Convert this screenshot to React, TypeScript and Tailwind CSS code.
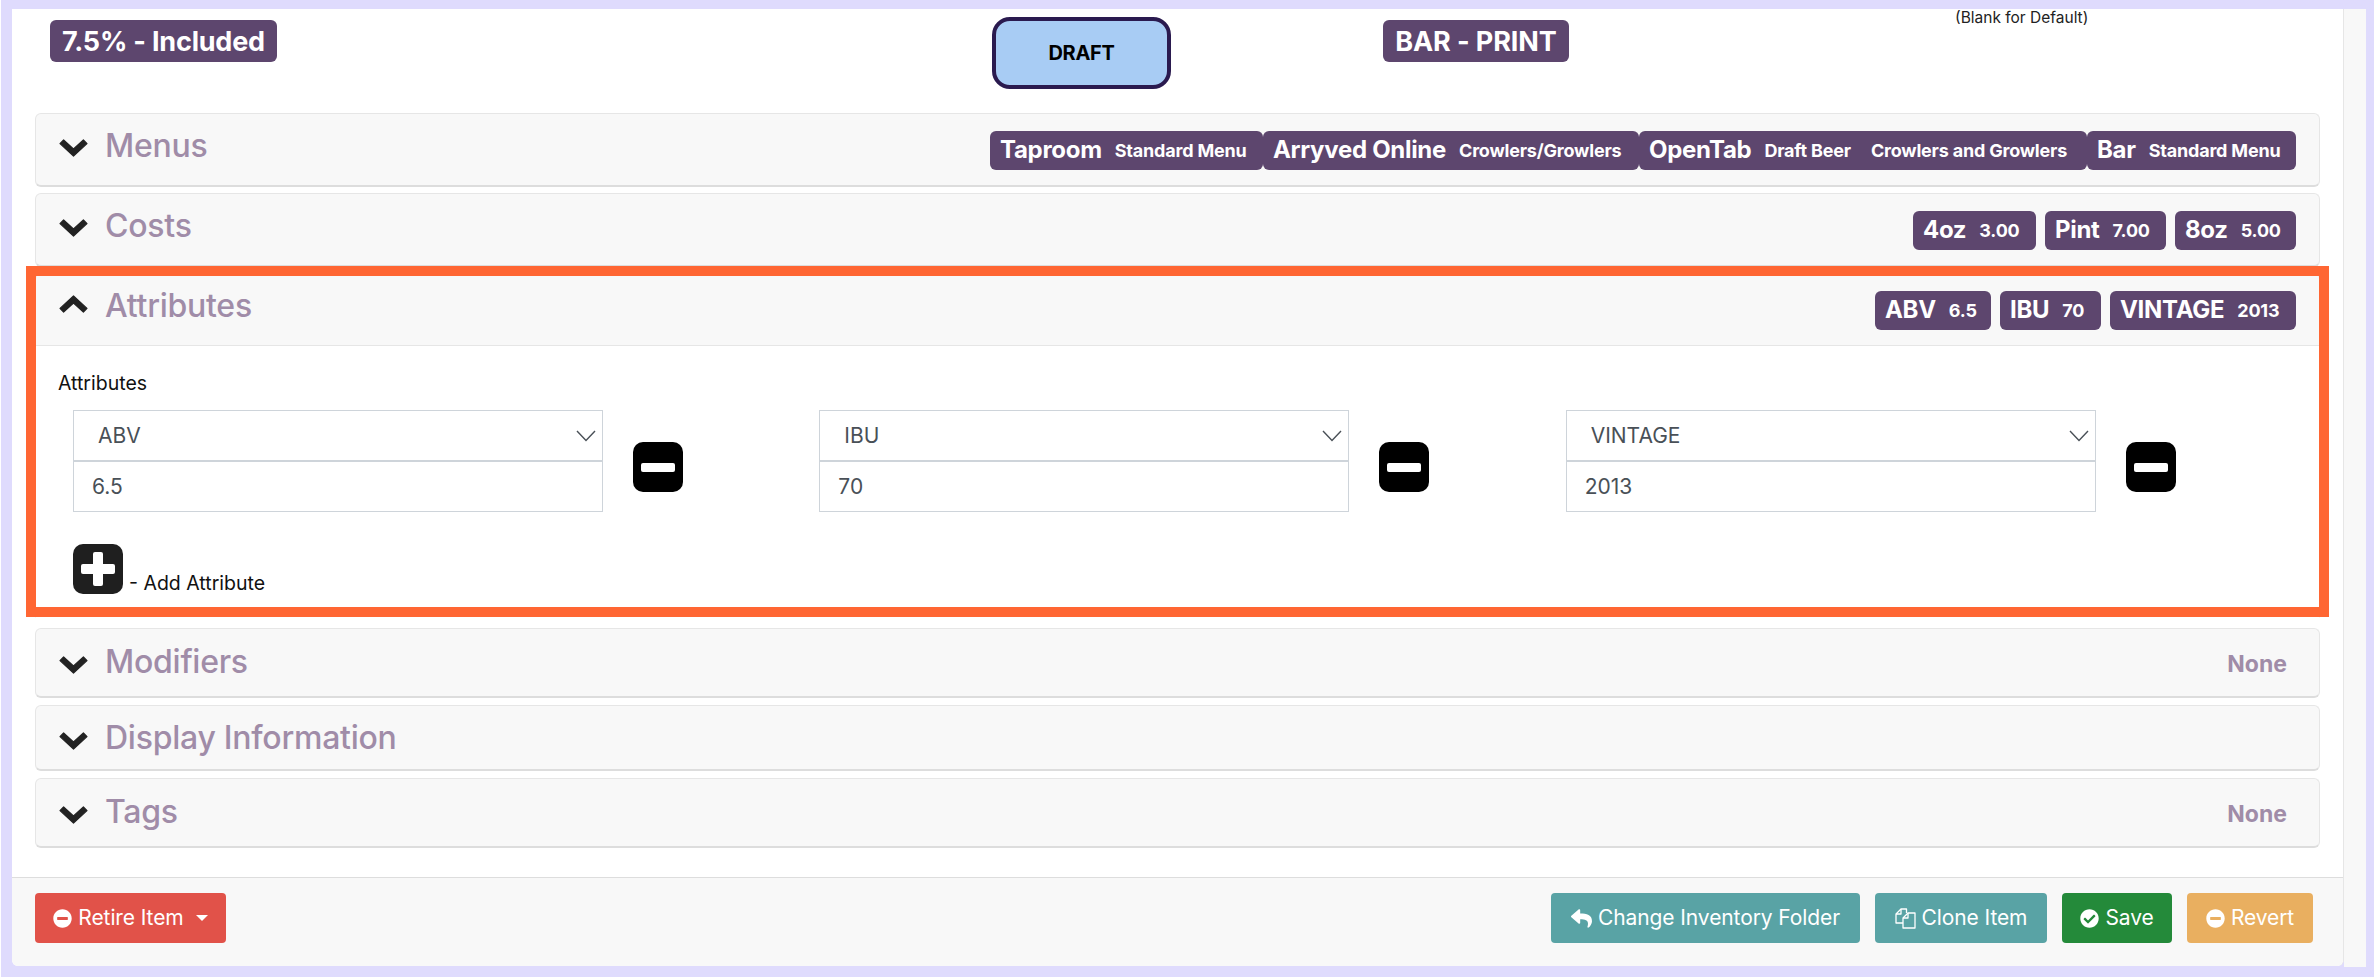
import React from "react";
import { FaMinusCircle, FaCheckCircle, FaReply } from "react-icons/fa";

function Tag({ main, subs, cls }: { main: string; subs: string[]; cls: string }) {
  return (
    <div className={`flex h-[39px] items-center rounded-[6px] bg-[#5d466e] pl-[10px] text-white ${cls}`}>
      <span className="-mt-[2px] text-[24px] leading-none font-bold tracking-[-0.3px]">{main}</span>
      {subs.map((s, i) => (
        <span key={s} className={`mt-[1px] text-[18px] leading-none font-bold tracking-[-0.2px] ${i === 0 ? "ml-[13px]" : "ml-[20px]"}`}>{s}</span>
      ))}
    </div>
  );
}

function Chevron({ up }: { up?: boolean }) {
  return (
    <svg width="29" height="18" viewBox="0 0 29 18" className={`mt-[5px] shrink-0 text-[#222222] ${up ? "-translate-y-[4px] rotate-180" : ""}`} fill="currentColor" stroke="currentColor" strokeWidth="1.2" strokeLinejoin="round">
      <path d="M1 4.6 L4.6 1 L14.5 10 L24.4 1 L28 4.6 L14.5 17 Z" />
    </svg>
  );
}

function Header({ title, open, right, h }: { title: string; open?: boolean; right?: React.ReactNode; h: string }) {
  return (
    <div className={`flex items-center pl-[23px] pr-[24px] ${h}`}>
      <Chevron up={open} />
      <span className="ml-[17px] text-[32px] leading-none font-medium tracking-[-0.25px] text-[#a08ca8]">{title}</span>
      <div className="ml-auto flex items-center">{right}</div>
    </div>
  );
}

const cardCls = "rounded-[6px] border border-b-2 border-[#e6e6e6] border-b-[#dddddd] bg-[#f8f8f8]";

function None() {
  return <span className="mr-[8px] mt-[4px] text-[23px] leading-none font-bold text-[#a08ca8]">None</span>;
}

function MinusBox() {
  return (
    <svg width="50" height="50" viewBox="0 0 50 50" className="ml-[30px] mt-[12px] shrink-0">
      <rect width="50" height="50" rx="10" fill="#000000" />
      <rect x="8" y="21" width="34" height="9" rx="2" fill="#ffffff" />
    </svg>
  );
}

function PlusBox() {
  return (
    <svg width="50" height="50" viewBox="0 0 50 50" className="shrink-0">
      <rect width="50" height="50" rx="10" fill="#1f1f1f" />
      <rect x="8" y="20" width="34" height="10" rx="2" fill="#ffffff" />
      <rect x="20" y="8" width="10" height="34" rx="2" fill="#ffffff" />
    </svg>
  );
}

function FilesIcon() {
  return (
    <svg width="21" height="21" viewBox="0 0 21 21" fill="none" stroke="#ffffff" strokeWidth="1.3" strokeLinejoin="round" className="shrink-0">
      <path d="M11.5 5V1H6L1 6v9h7" />
      <path d="M6 1v5H1" />
      <path d="M8 20V10l5-5h7v15z" />
      <path d="M13 5v5H8" />
    </svg>
  );
}

function Attr({ name, value }: { name: string; value: string }) {
  return (
    <div className="flex items-center pl-[14px]">
      <div className="w-[530px]">
        <div className="flex h-[51px] items-center justify-between border border-[#ced4da] pl-[24px] pr-[6px] text-[21px] text-[#495057]">
          <span>{name}</span>
          <svg width="20" height="12" viewBox="0 0 20 12" fill="none" stroke="#495057" strokeWidth="1.4"><path d="M1 1l9 9.5L19 1" /></svg>
        </div>
        <div className="flex h-[51px] items-center border border-[#ced4da] pl-[18px] pt-[1px] text-[21px] text-[#495057]">{value}</div>
      </div>
      <MinusBox />
    </div>
  );
}

function Btn({ icon, label, cls, caret }: { icon: React.ReactNode; label: string; cls: string; caret?: boolean }) {
  return (
    <div className={`flex h-[50px] items-center justify-center gap-[6px] rounded-[4px] text-[21px] text-white ${cls}`}>
      {icon}
      <span className="tracking-[-0.1px]">{label}</span>
      {caret && <span className="ml-[6px] h-0 w-0 border-x-[6px] border-t-[6px] border-x-transparent border-t-white" />}
    </div>
  );
}

export default function App() {
  return (
    <div className="flex h-[978px] w-[2374px] overflow-hidden border-b border-l border-white bg-[#dfdbfd] pl-[11px] pt-[9px]" style={{ fontFamily: "Inter, sans-serif" }}>
      <div className="flex h-[957px] w-[2332px] flex-col rounded-b-[6px] border-r border-[#e6e6e6] bg-white">
        <div className="flex h-[104px] items-start">
          <div className="ml-[38px] mt-[11px] flex h-[42px] w-[227px] items-center justify-center rounded-[6px] bg-[#5d466e] text-[27px] leading-none font-bold tracking-[-0.2px] text-white">7.5% - Included</div>
          <div className="ml-[715px] mt-[8px] flex h-[72px] w-[179px] items-center justify-center rounded-[18px] border-[4px] border-[#2a1a4f] bg-[#a8ccf4] text-[20px] font-bold tracking-[-0.3px] text-black">DRAFT</div>
          <div className="ml-[212px] mt-[11px] flex h-[42px] w-[186px] items-center justify-center rounded-[6px] bg-[#5d466e] text-[27px] leading-none font-bold tracking-[-0.1px] text-white">BAR - PRINT</div>
          <div className="ml-[386px] mt-[1px] whitespace-nowrap text-[15.5px] leading-[16px] text-[#222222]">(Blank for Default)</div>
        </div>
        <div className="flex flex-col px-[23px]">
          <div className={`${cardCls} h-[74px]`}>
            <Header title="Menus" h="h-[63px]" right={
              <div className="-mr-[1px] mt-[10px] flex">
                <Tag cls="w-[273px]" main="Taproom" subs={["Standard Menu"]} />
                <Tag cls="w-[376px]" main="Arryved Online" subs={["Crowlers/Growlers"]} />
                <Tag cls="w-[448px]" main="OpenTab" subs={["Draft Beer", "Crowlers and Growlers"]} />
                <Tag cls="w-[209px]" main="Bar" subs={["Standard Menu"]} />
              </div>
            } />
          </div>
          <div className={`${cardCls} mt-[6px] h-[74px]`}>
            <Header title="Costs" h="h-[63px]" right={
              <div className="-mr-[1px] mt-[10px] flex gap-[9px]">
                <Tag cls="w-[123px]" main="4oz" subs={["3.00"]} />
                <Tag cls="w-[121px]" main="Pint" subs={["7.00"]} />
                <Tag cls="w-[121px]" main="8oz" subs={["5.00"]} />
              </div>
            } />
          </div>
          <div className={`${cardCls} relative mt-[6px] h-[348px]`}>
            <Header title="Attributes" open h="h-[63px]" right={
              <div className="-mr-[1px] mt-[10px] flex gap-[9px]">
                <Tag cls="w-[116px]" main="ABV" subs={["6.5"]} />
                <Tag cls="w-[101px]" main="IBU" subs={["70"]} />
                <Tag cls="w-[186px]" main="VINTAGE" subs={["2013"]} />
              </div>
            } />
            <div className="mt-[8px] h-[276px] border-t border-[#e6e6e6] bg-white pl-[22px] pt-[25px]">
              <div className="text-[19.5px] leading-[24px] text-[#111111]">Attributes</div>
              <div className="ml-[1px] mt-[15px] grid w-[2239px] grid-cols-3">
                <Attr name="ABV" value="6.5" />
                <Attr name="IBU" value="70" />
                <Attr name="VINTAGE" value="2013" />
              </div>
              <div className="ml-[15px] mt-[32px] flex items-end">
                <PlusBox />
                <span className="ml-[6px] -mb-[1px] text-[19.5px] leading-[24px] text-[#111111]">- Add Attribute</span>
              </div>
            </div>
            <div className="pointer-events-none absolute -left-[10px] -right-[10px] -top-[8px] bottom-[2px] border-[10px] border-[#ff6633]" />
          </div>
          <div className={`${cardCls} mt-[7px] h-[70px]`}>
            <Header title="Modifiers" h="h-[66px]" right={<None />} />
          </div>
          <div className={`${cardCls} mt-[7px] h-[66px]`}>
            <Header title="Display Information" h="h-[64px]" />
          </div>
          <div className={`${cardCls} mt-[7px] h-[70px]`}>
            <Header title="Tags" h="h-[66px]" right={<None />} />
          </div>
        </div>
        <div className="mt-[29px] flex h-[89px] items-start justify-between rounded-b-[6px] border-t border-[#dddddd] bg-[#f8f8f8] pl-[23px] pr-[30px] pt-[15px]">
          <Btn cls="w-[191px] bg-[#e15249]" caret icon={<FaMinusCircle className="h-[19px] w-[19px]" />} label="Retire Item" />
          <div className="flex gap-[15px]">
            <Btn cls="w-[309px] bg-[#59a3a5]" icon={<FaReply className="h-[21px] w-[21px]" />} label="Change Inventory Folder" />
            <Btn cls="w-[172px] bg-[#59a3a5]" icon={<FilesIcon />} label="Clone Item" />
            <Btn cls="w-[110px] bg-[#248a3a]" icon={<FaCheckCircle className="h-[19px] w-[19px]" />} label="Save" />
            <Btn cls="w-[126px] bg-[#e9af60]" icon={<FaMinusCircle className="h-[19px] w-[19px]" />} label="Revert" />
          </div>
        </div>
      </div>
      <div className="h-[958px] w-[22px] bg-[#f8f8f8]" />
    </div>
  );
}
